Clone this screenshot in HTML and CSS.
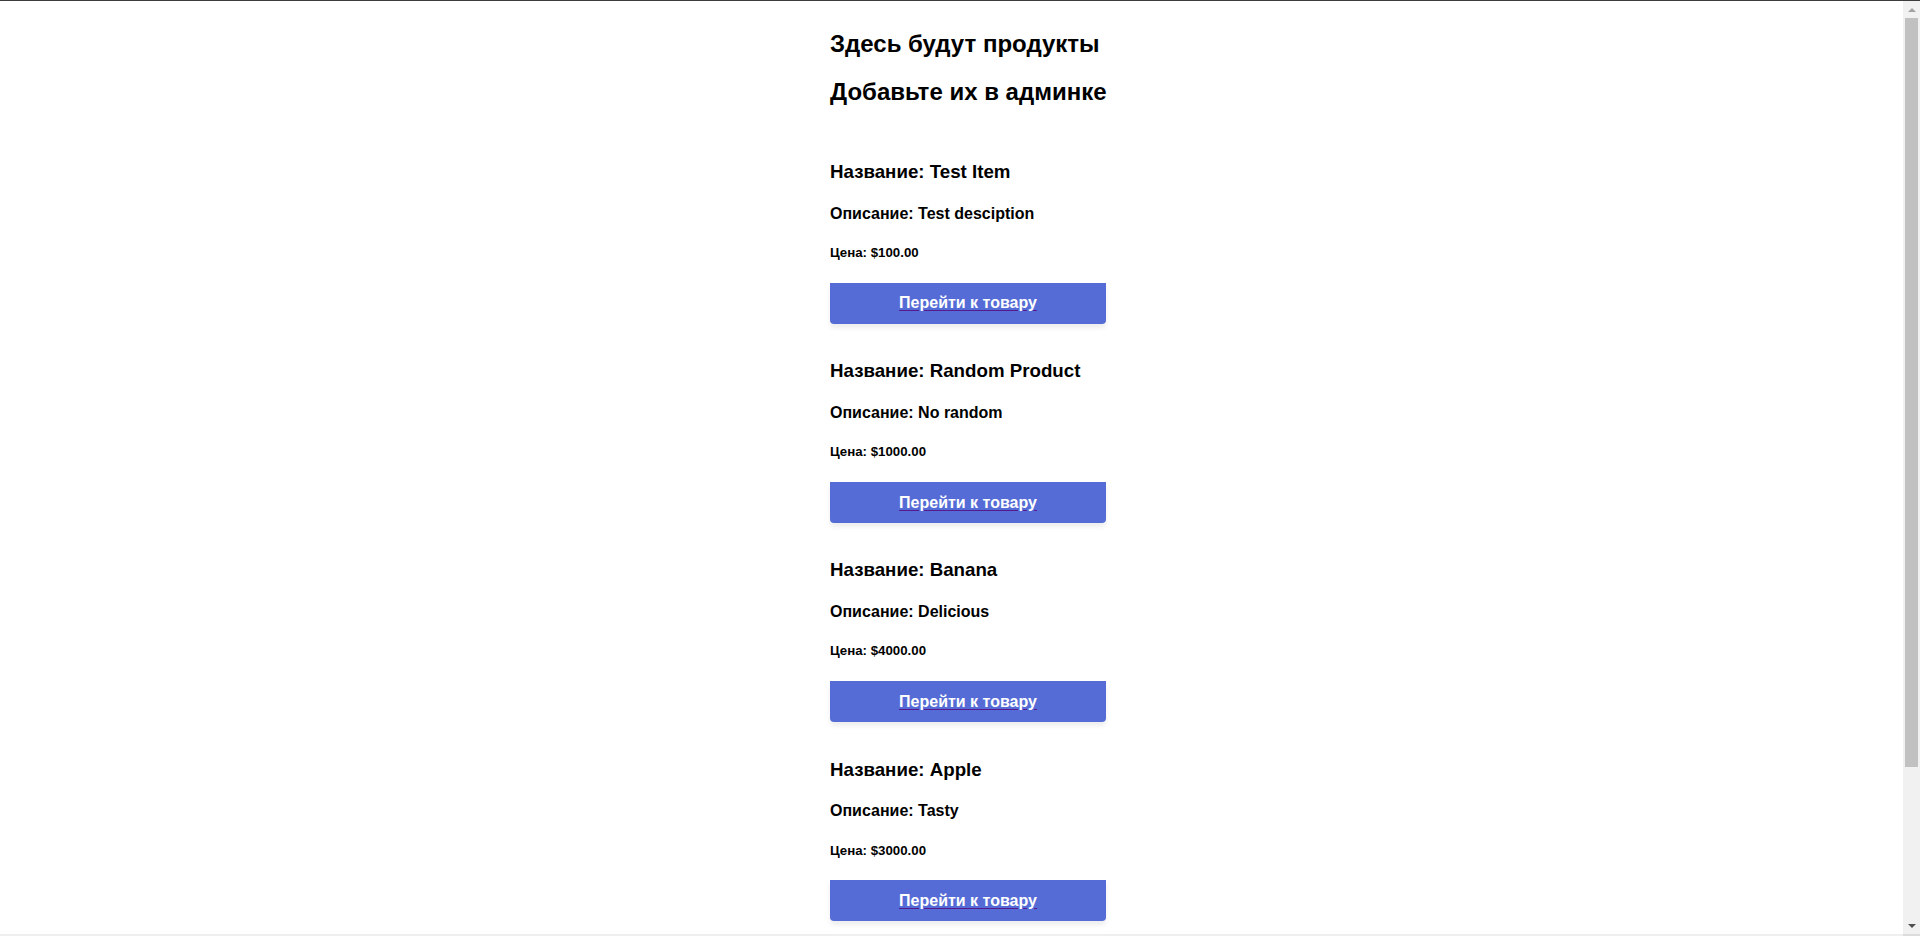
FILE: index.html
```html
<!DOCTYPE html>
<html lang="ru">
<head>
<meta charset="utf-8">
<title>Продукты</title>
<link rel="stylesheet" href="styles.css">
</head>
<body>
<div class="frame">
  <div class="topline"></div>
  <div class="viewport">
    <main class="page">
      <div class="intro">
        <h2 class="intro-title">Здесь будут продукты</h2>
        <h2 class="intro-title">Добавьте их в админке</h2>
      </div>
      <section class="products">
        <article class="product">
          <h3 class="product-name">Название: Test Item</h3>
          <h4 class="product-desc">Описание: Test desciption</h4>
          <h5 class="product-price">Цена: $100.00</h5>
          <a class="product-link" href="#"><span class="btn-label">Перейти к товару</span></a>
        </article>
        <article class="product">
          <h3 class="product-name">Название: Random Product</h3>
          <h4 class="product-desc">Описание: No random</h4>
          <h5 class="product-price">Цена: $1000.00</h5>
          <a class="product-link" href="#"><span class="btn-label">Перейти к товару</span></a>
        </article>
        <article class="product">
          <h3 class="product-name">Название: Banana</h3>
          <h4 class="product-desc">Описание: Delicious</h4>
          <h5 class="product-price">Цена: $4000.00</h5>
          <a class="product-link" href="#"><span class="btn-label">Перейти к товару</span></a>
        </article>
        <article class="product">
          <h3 class="product-name">Название: Apple</h3>
          <h4 class="product-desc">Описание: Tasty</h4>
          <h5 class="product-price">Цена: $3000.00</h5>
          <a class="product-link" href="#"><span class="btn-label">Перейти к товару</span></a>
        </article>
      </section>
    </main>
    <div class="scrollbar">
      <div class="sb-arrow sb-up"></div>
      <div class="sb-track"><div class="sb-thumb"></div></div>
      <div class="sb-arrow sb-down"></div>
    </div>
  </div>
  <div class="bottombar"><div class="bottombar-fill"></div><div class="bottombar-corner"></div></div>
</div>
</body>
</html>
```

FILE: styles.css
```css
html, body {
  margin: 0;
  padding: 0;
  height: 100%;
  overflow: hidden;
  background: #ffffff;
}

body {
  font-family: "Liberation Sans", Arial, sans-serif;
  color: #000000;
}

.frame {
  display: flex;
  flex-direction: column;
  height: 936px;
  width: 1920px;
}

.topline {
  height: 1px;
  background: #3c3c3c;
  flex: none;
}

.viewport {
  flex: 1;
  display: flex;
  min-height: 0;
}

.page {
  flex: 1;
  overflow: hidden;
  padding: 29px 0 0 830px;
}

.intro {
  display: flex;
  flex-direction: column;
  gap: 19.92px;
}

.intro-title {
  margin: 0;
  font-size: 24px;
  font-weight: bold;
  line-height: 27.6px;
}

.products {
  display: flex;
  flex-direction: column;
  gap: 36.2px;
  margin-top: 56.2px;
  width: 276px;
}

.product {
  display: flex;
  flex-direction: column;
}

.product-name {
  margin: 0;
  font-size: 18.72px;
  font-weight: bold;
  line-height: 21.5px;
}

.product-desc {
  margin: 21.9px 0 0;
  font-size: 16px;
  font-weight: bold;
  line-height: 18.4px;
}

.product-price {
  margin: 22.18px 0 0;
  font-size: 13.28px;
  font-weight: bold;
  line-height: 15.27px;
}

.product-link {
  margin-top: 22.18px;
  height: 41.5px;
  display: flex;
  align-items: center;
  justify-content: center;
  background: #556cd6;
  border-radius: 0 0 4px 4px;
  box-shadow: 0px 4px 5.5px 0px rgba(0, 0, 0, 0.07);
  color: #551a8b;
  text-decoration: none;
}

.btn-label {
  color: #ffffff;
  font-size: 16px;
  font-weight: bold;
  text-decoration: underline;
  text-decoration-color: #551a8b;
  text-underline-offset: 2px;
}

.scrollbar {
  width: 17px;
  flex: none;
  background: #f1f1f1;
  display: flex;
  flex-direction: column;
}

.sb-arrow {
  height: 17px;
  flex: none;
  display: flex;
  align-items: center;
  justify-content: center;
}

.sb-up::before {
  content: "";
  border-left: 4px solid transparent;
  border-right: 4px solid transparent;
  border-bottom: 4px solid #a3a3a3;
}

.sb-down::before {
  content: "";
  border-left: 4px solid transparent;
  border-right: 4px solid transparent;
  border-top: 4px solid #505050;
}

.sb-track {
  flex: 1;
  padding: 0 2px;
}

.sb-thumb {
  height: 749px;
  background: #c1c1c1;
}

.bottombar {
  height: 2px;
  flex: none;
  display: flex;
}

.bottombar-fill {
  flex: 1;
  background: #efefef;
}

.bottombar-corner {
  width: 17px;
  background: #dcdcdc;
}
```
